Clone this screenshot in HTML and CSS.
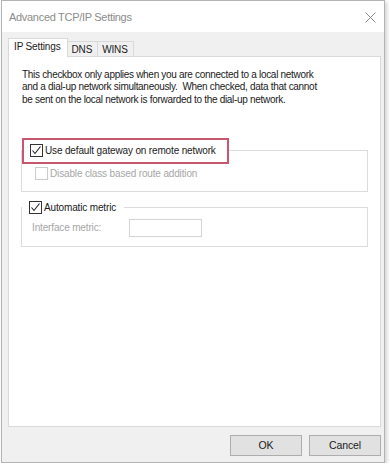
FILE: index.html
```html
<!DOCTYPE html>
<html lang="en">

<head>
    <meta charset="UTF-8">
    <title>Advanced TCP/IP Settings</title>
    <link rel="stylesheet" href="styles.css">
</head>

<body>

    <div class="window">
        <!-- title bar -->
        <div class="titlebar">
            <span class="title">Advanced TCP/IP Settings</span>
            <svg class="close" width="11" height="11" viewBox="0 0 11 11">
                <path d="M0.5 0.5 L10.5 10.5 M10.5 0.5 L0.5 10.5" stroke="#8a8a8a" stroke-width="1" fill="none" />
            </svg>
        </div>

        <div class="client">
            <!-- tabs -->
            <div class="tabs">
                <div class="tab active">IP Settings</div>
                <div class="tab">DNS</div>
                <div class="tab">WINS</div>
            </div>

            <div class="panel">
                <p class="note">This checkbox only applies when you are connected to a local network<br>
                    and a dial-up network simultaneously.&nbsp; When checked, data that cannot<br>
                    be sent on the local network is forwarded to the dial-up network.</p>

                <fieldset class="group gateway">
                    <legend class="highlight">
                        <span class="check on">
                            <svg width="11" height="11" viewBox="0 0 11 11"><path d="M1.5 5.5 L4 8.5 L9.5 1.5" stroke="#222" stroke-width="1.1" fill="none" /></svg>
                        </span>
                        Use default gateway on remote network
                    </legend>
                    <div class="row">
                        <span class="check disabled"></span>
                        <span class="muted">Disable class based route addition</span>
                    </div>
                </fieldset>

                <fieldset class="group metric">
                    <legend class="plain">
                        <span class="check on">
                            <svg width="11" height="11" viewBox="0 0 11 11"><path d="M1.5 5.5 L4 8.5 L9.5 1.5" stroke="#222" stroke-width="1.1" fill="none" /></svg>
                        </span>
                        Automatic metric
                    </legend>
                    <div class="row field">
                        <span class="muted label">Interface metric:</span>
                        <span class="input"></span>
                    </div>
                </fieldset>
            </div>

            <!-- buttons -->
            <div class="buttons">
                <div class="btn">OK</div>
                <div class="btn">Cancel</div>
            </div>
        </div>
    </div>

</body>

</html>
```

FILE: styles.css
```css
* {
    margin: 0;
    padding: 0;
    box-sizing: border-box;
}

body {
    background: #ffffff;
    font-family: "Liberation Sans", Arial, sans-serif;
    font-size: 10px;
    letter-spacing: -0.15px;
    color: #1a1a1a;
}

.window {
    width: 384px;
    height: 463px;
    margin-left: 1px;
    border: 1px solid #b4b4b4;
    box-shadow: 2px 2px 4px rgba(0, 0, 0, 0.18);
    display: flex;
    flex-direction: column;
}

.titlebar {
    height: 31px;
    background: #ffffff;
    display: flex;
    align-items: center;
    justify-content: space-between;
    padding: 0 8px 0 7px;
}

.titlebar .title {
    font-size: 11px;
    letter-spacing: -0.3px;
    color: #8c8c8c;
    margin-top: 1px;
}

.titlebar .close {
    margin-top: 1px;
}

.client {
    flex: 1;
    background: #f0f0f0;
    padding: 6px 3px 0 6px;
    display: flex;
    flex-direction: column;
}

.tabs {
    display: flex;
    align-items: flex-end;
    height: 18px;
}

.tab {
    height: 15px;
    padding: 0 5px 0 4px;
    line-height: 15px;
    border: 1px solid #d9d9d9;
    border-bottom: none;
    background: #f0f0f0;
    margin-left: -1px;
}

.tab.active {
    height: 19px;
    margin-bottom: -1px;
    margin-left: 0;
    padding: 0 6px 0 5px;
    line-height: 16px;
    background: #ffffff;
    position: relative;
    z-index: 1;
}

.panel {
    height: 371px;
    border: 1px solid #d9d9d9;
    background: #ffffff;
    padding: 12px 10px 0 13px;
}

.note {
    line-height: 12.3px;
    letter-spacing: -0.3px;
    color: #1a1a1a;
}

.group {
    width: 347px;
    border: 1px solid #dcdcdc;
    margin-left: -1px;
    padding: 0;
}

.gateway {
    margin-top: 32px;
    padding: 3px 0 11px 0;
}

.gateway .row {
    padding-left: 13px;
}

.metric {
    margin-top: 9px;
    padding: 4px 0 9px 0;
}

.metric .row {
    padding-left: 10px;
}

legend {
    display: flex;
    align-items: center;
    gap: 2px;
    margin-left: 0;
}

.highlight {
    height: 26px;
    border: 2px solid #c9566f;
    padding: 0 11px 0 6px;
}

.plain {
    padding: 0 8px 0 7px;
    height: 14px;
}

.check {
    width: 13px;
    height: 13px;
    border: 1px solid #333333;
    background: #ffffff;
    display: inline-flex;
    align-items: center;
    justify-content: center;
}

.check.disabled {
    border-color: #cccccc;
}

.row {
    display: flex;
    align-items: center;
    gap: 2px;
}

.muted {
    color: #a6a6a6;
}

.field .label {
    width: 95px;
}

.input {
    width: 73px;
    height: 18px;
    border: 1px solid #d4d4d4;
    background: #ffffff;
}

.buttons {
    display: flex;
    justify-content: flex-end;
    gap: 7px;
    margin-top: 8px;
}

.btn {
    width: 72px;
    height: 21px;
    border: 1px solid #adadad;
    background: #e1e1e1;
    text-align: center;
    line-height: 19px;
    font-size: 10.5px;
    color: #1a1a1a;
}
```
